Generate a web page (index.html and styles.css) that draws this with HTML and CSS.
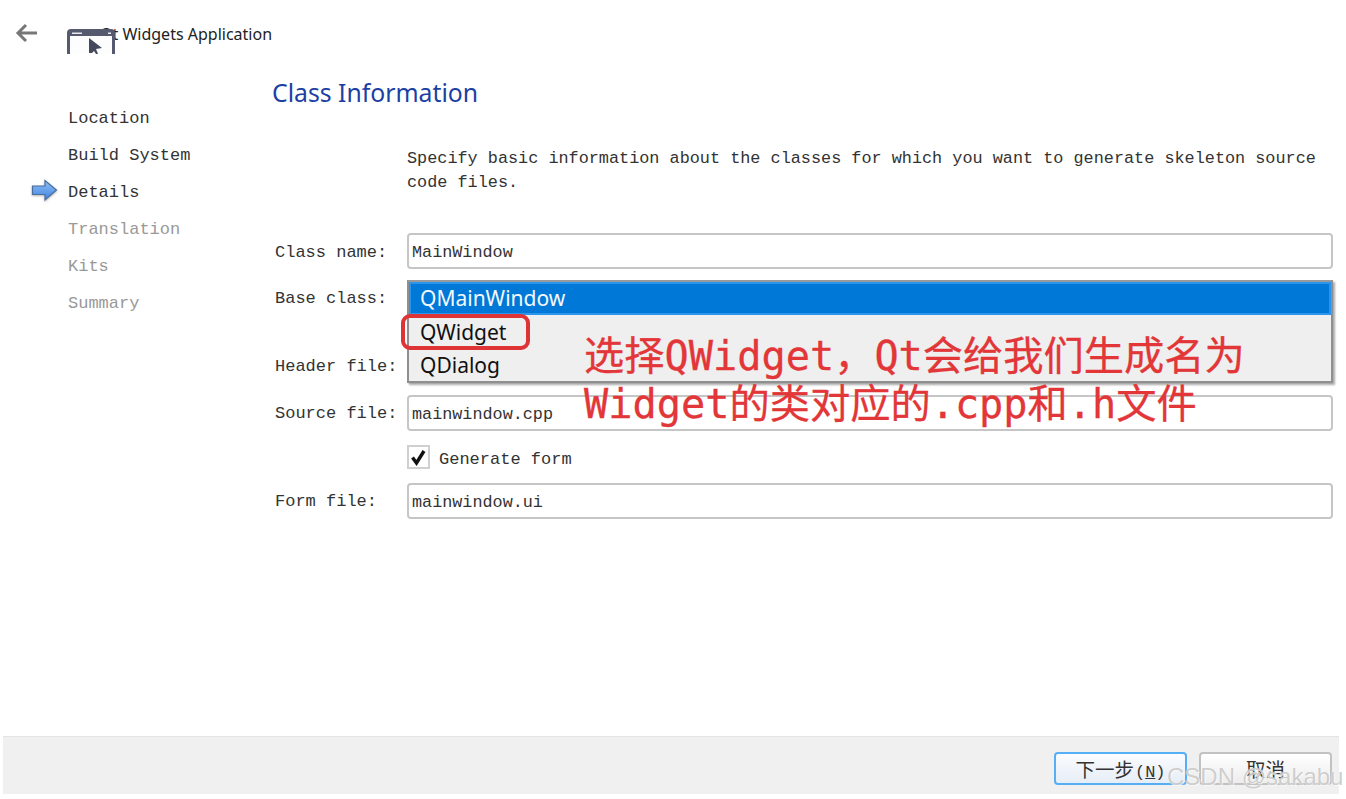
FILE: index.html
```html
<!DOCTYPE html>
<html lang="zh-CN">
<head>
<meta charset="utf-8">
<title>Qt Widgets Application</title>
<link rel="stylesheet" href="styles.css">
</head>
<body>
<div class="page">
  <header class="top">
    <svg class="back" width="24" height="20" viewBox="0 0 24 20"><path d="M22 10H3M11 2 3 10l8 8" fill="none" stroke="#777" stroke-width="3"/></svg>
    <div class="app-title">
      <span class="app-title-text">Qt Widgets Application</span>
      <svg class="app-icon" width="48" height="25" viewBox="0 0 48 25"><path d="M1.500 25V4q0-2.500 2.500-2.500h40q2.500 0 2.500 2.500v21" fill="#fdfdfd" stroke="#555a6e" stroke-width="3"/><path d="M2 2h44v5H2z" fill="#555a6e"/><path d="M5 3.500h10v1.500H5zM41 3.500h3v1.500h-3z" fill="#e8e8ee"/><path d="M22 9v15h3l2-2 2 3h2l-2-5 6-1z" fill="#44495e"/></svg>
    </div>
  </header>
  <main class="main">
    <nav class="steps">
      <div class="step">Location</div>
      <div class="step">Build System</div>
      <div class="step step-current">
        <svg class="step-arrow" width="28" height="26" viewBox="0 0 28 26"><defs><linearGradient id="arrowFill" x1="0" y1="0" x2="0" y2="1"><stop offset="0" stop-color="#8fc0f5"/><stop offset="1" stop-color="#3f83e0"/></linearGradient></defs><path d="M1.500 8H14V2.500L25.500 12 14 22v-5.500H1.500z" fill="url(#arrowFill)" stroke="#4a6f9f" stroke-width="1.200"/></svg>
        Details
      </div>
      <div class="step step-off">Translation</div>
      <div class="step step-off">Kits</div>
      <div class="step step-off">Summary</div>
    </nav>
    <section class="content">
      <h1 class="heading">Class Information</h1>
      <p class="intro">Specify basic information about the classes for which you want to generate skeleton source code files.</p>
      <div class="form">
        <label class="lbl lbl-name">Class name:</label>
        <div class="field">MainWindow</div>

        <label class="lbl lbl-base">Base class:</label>
        <div class="combo-slot">
          <div class="popup">
            <div class="opt opt-sel">QMainWindow</div>
            <div class="opt">QWidget</div>
            <div class="opt">QDialog</div>
          </div>
          <div class="mark"></div>
        </div>

        <label class="lbl">Header file:</label>
        <div class="field"></div>

        <label class="lbl">Source file:</label>
        <div class="field field-tight">mainwindow.cpp</div>

        <span></span>
        <div class="check-row">
          <span class="check"><svg width="17" height="17" viewBox="0 0 17 17"><path d="M2.500 8.500 6.500 14 14 2" fill="none" stroke="#111" stroke-width="3.400"/></svg></span>
          <span class="check-label">Generate form</span>
        </div>

        <label class="lbl">Form file:</label>
        <div class="field">mainwindow.ui</div>
      </div>
    </section>
  </main>
  <footer class="bottom">
    <button class="btn btn-primary">下一步<span class="accel">(<u>N</u>)</span></button>
    <button class="btn">取消</button>
  </footer>
  <div class="note">选择QWidget&#xFF0C;Qt会给我们生成名为<br>Widget的类对应的.cpp和.h文件</div>
  <div class="wm">CSDN @sakabu</div>
</div>
</body>
</html>
```
FILE: styles.css
```css
* { box-sizing: border-box; }
html, body { margin: 0; height: 100%; background: #fff; overflow: hidden; }
.page {
  position: relative;
  width: 1346px;
  height: 799px;
  display: flex;
  flex-direction: column;
  font-family: "Liberation Mono", "Noto Sans CJK SC", monospace;
  font-size: 17px;
  color: #333;
}
.top {
  height: 54px;
  display: flex;
  align-items: flex-start;
  padding: 23px 0 0 15px;
}
.back { display: block; }
.app-title {
  position: relative;
  margin-left: 28px;
  height: 31px;
  width: 240px;
  font-family: "Noto Sans", sans-serif;
}
.app-title-text {
  position: absolute;
  left: 33px;
  top: -1px;
  font-size: 16px;
  line-height: 24px;
  white-space: nowrap;
  color: #222;
}
.app-icon { position: absolute; left: 0; top: 6px; }
.main { flex: 1; display: flex; min-height: 0; }
.steps {
  width: 272px;
  padding: 53px 0 0 68px;
  display: flex;
  flex-direction: column;
  gap: 13px;
}
.step { height: 24px; line-height: 24px; position: relative; white-space: nowrap; }
.step-off { color: #999; }
.step-arrow { position: absolute; left: -37px; top: -3px; filter: drop-shadow(0 1px 1px rgba(0, 0, 0, .3)); }
.content { flex: 1; min-width: 0; padding-right: 13px; }
.heading {
  margin: 19px 0 0;
  font: 400 24.750px/40px "Noto Sans", sans-serif;
  color: #1c3fa3;
}
.intro {
  margin: 34px 0 0 135px;
  line-height: 24px;
  font-size: 16.830px;
  height: 48px;
}
.form {
  margin-top: 38px;
  display: grid;
  grid-template-columns: 135px 926px;
  row-gap: 12px;
  align-items: center;
}
.lbl { padding-left: 3px; white-space: nowrap; }
.lbl-name { padding-top: 2px; }
.lbl-base { align-self: start; padding-top: 8px; }
.field {
  height: 36px;
  line-height: 36px;
  padding-left: 3px;
  background: #fff;
  border: 2px solid #c6c6c6;
  border-radius: 4px;
  font-size: 16.800px;
}
.field-tight { margin-top: -1px; }
.combo-slot { position: relative; height: 55px; }
.popup {
  position: absolute;
  left: 0;
  right: 0;
  top: -1px;
  height: 103px;
  background: #efefef;
  border: 2px solid #8f8f8f;
  border-top-color: #9a9a9a;
  box-shadow: 2px 2px 2px #aaa;
  z-index: 2;
  font-family: "Noto Sans", sans-serif;
  font-size: 21px;
  color: #111;
}
.opt { height: 33px; line-height: 34px; padding-left: 11px; }
.opt-sel {
  height: 33px;
  background: #0078d7;
  border: 2px solid #2b95ee;
  padding-left: 9px;
  line-height: 28px;
  color: #f4f8fc;
}
.mark {
  position: absolute;
  left: -6px;
  top: 33px;
  width: 129px;
  height: 36px;
  border: 4px solid #df3436;
  border-radius: 9px;
  z-index: 3;
}
.check-row { display: flex; align-items: center; gap: 9px; height: 26px; margin: 1px 0; }
.check-label { padding-top: 4px; }
.check {
  width: 23px;
  height: 24px;
  border: 2px solid #d0d0d0;
  display: flex;
  align-items: center;
  justify-content: center;
  background: #fff;
}
.check svg { display: block; }
.bottom {
  height: 58px;
  margin: 0 7px 5px 3px;
  background: #f0f0f0;
  border-top: 1px solid #e4e4e4;
  display: flex;
  justify-content: flex-end;
  align-items: flex-start;
  gap: 12px;
  padding: 15px 7px 0 0;
}
.btn {
  width: 133px;
  height: 33px;
  padding: 0 0 5px;
  background: linear-gradient(#fff, #ededed);
  border: 2px solid #c2c2c2;
  border-radius: 4px;
  font-family: "Liberation Serif", "Noto Sans CJK SC", serif;
  font-size: 19.500px;
  color: #333;
}
.accel { font-family: "Liberation Mono", monospace; font-size: 17px; margin-left: 1px; }
.btn-primary { border-color: #56aef5; background: linear-gradient(#fafcff, #e6edf5); }
.note {
  position: absolute;
  left: 584px;
  top: 332px;
  font-family: "DejaVu Sans Mono", "Noto Sans CJK SC", monospace;
  font-size: 40.250px;
  line-height: 48px;
  color: #e23638;
  -webkit-text-stroke: .3px #e23638;
  z-index: 4;
  white-space: nowrap;
}
.wm {
  position: absolute;
  left: 1167px;
  top: 763px;
  font-family: "Liberation Sans", sans-serif;
  font-size: 24px;
  line-height: 28px;
  color: rgba(190, 190, 190, .75);
  text-shadow: 0 0 1px rgba(255, 255, 255, .9), 1px 1px 0 rgba(255, 255, 255, .6);
  white-space: nowrap;
  z-index: 5;
}
```
